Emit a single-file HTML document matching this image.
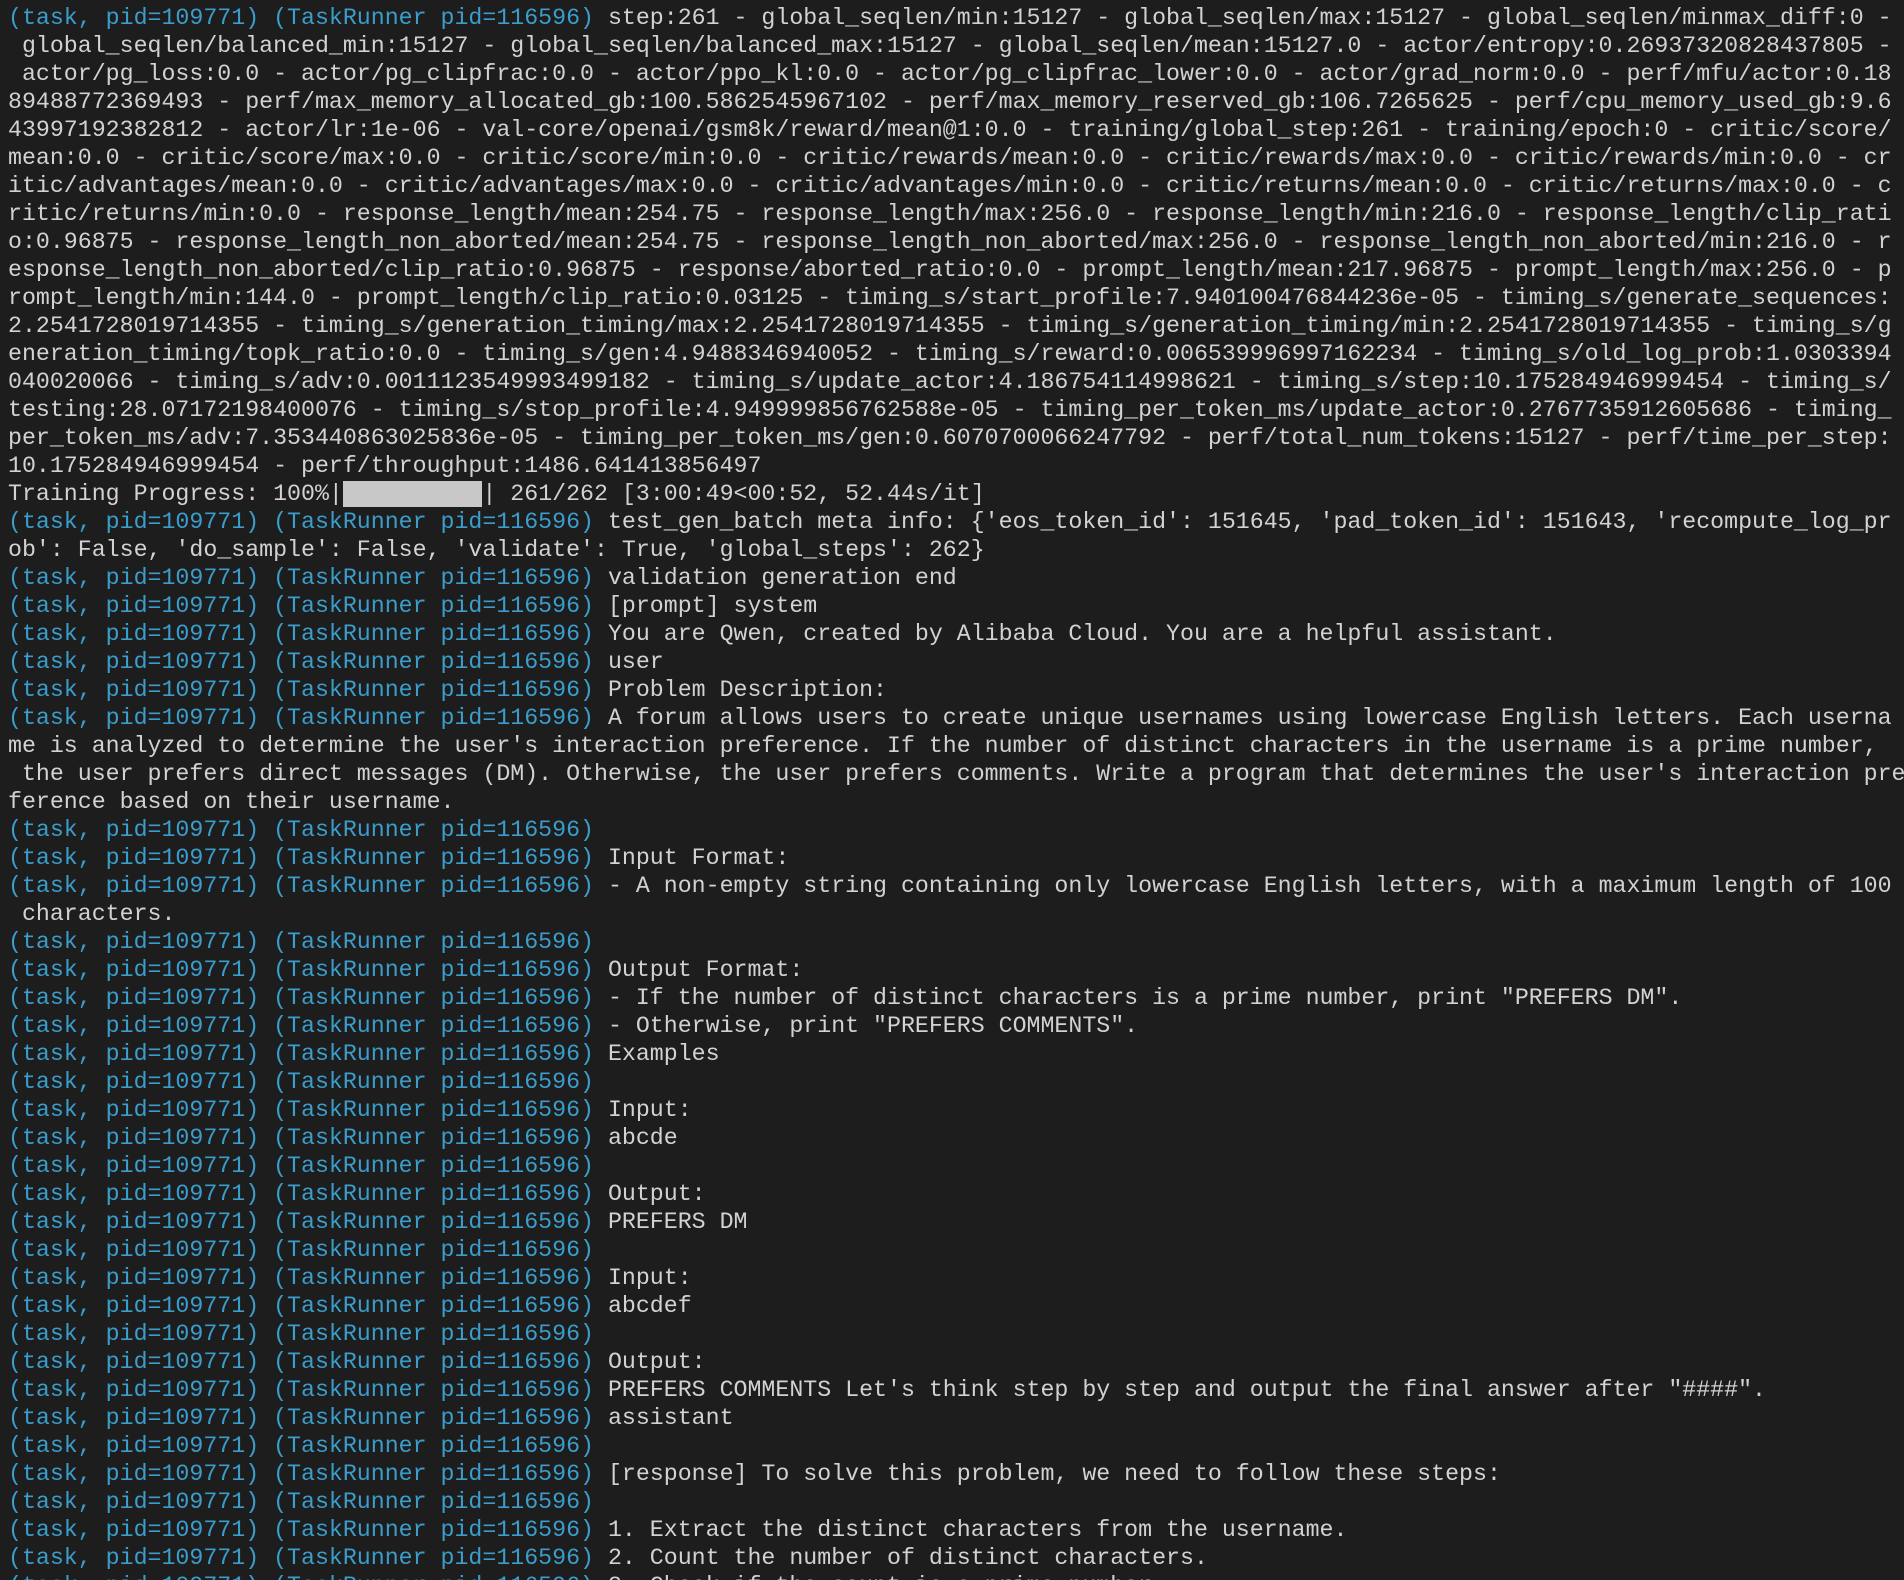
<!DOCTYPE html>
<html><head><meta charset="utf-8"><style>
html,body{margin:0;padding:0;background:#1d1d1d;width:1904px;height:1580px;overflow:hidden}
pre{margin:0;padding:4px 0 0 8px;font-family:"Liberation Mono","DejaVu Sans Mono",monospace;font-size:23.25px;line-height:28px;color:#d2d2d2;white-space:pre}
.b{color:#3a9dcb}
.bar{background:#c8c8c8}
</style></head><body><pre><span class="b">(task, pid=109771) (TaskRunner pid=116596)</span> step:261 - global_seqlen/min:15127 - global_seqlen/max:15127 - global_seqlen/minmax_diff:0 -
 global_seqlen/balanced_min:15127 - global_seqlen/balanced_max:15127 - global_seqlen/mean:15127.0 - actor/entropy:0.26937320828437805 -
 actor/pg_loss:0.0 - actor/pg_clipfrac:0.0 - actor/ppo_kl:0.0 - actor/pg_clipfrac_lower:0.0 - actor/grad_norm:0.0 - perf/mfu/actor:0.18
89488772369493 - perf/max_memory_allocated_gb:100.5862545967102 - perf/max_memory_reserved_gb:106.7265625 - perf/cpu_memory_used_gb:9.6
43997192382812 - actor/lr:1e-06 - val-core/openai/gsm8k/reward/mean@1:0.0 - training/global_step:261 - training/epoch:0 - critic/score/
mean:0.0 - critic/score/max:0.0 - critic/score/min:0.0 - critic/rewards/mean:0.0 - critic/rewards/max:0.0 - critic/rewards/min:0.0 - cr
itic/advantages/mean:0.0 - critic/advantages/max:0.0 - critic/advantages/min:0.0 - critic/returns/mean:0.0 - critic/returns/max:0.0 - c
ritic/returns/min:0.0 - response_length/mean:254.75 - response_length/max:256.0 - response_length/min:216.0 - response_length/clip_rati
o:0.96875 - response_length_non_aborted/mean:254.75 - response_length_non_aborted/max:256.0 - response_length_non_aborted/min:216.0 - r
esponse_length_non_aborted/clip_ratio:0.96875 - response/aborted_ratio:0.0 - prompt_length/mean:217.96875 - prompt_length/max:256.0 - p
rompt_length/min:144.0 - prompt_length/clip_ratio:0.03125 - timing_s/start_profile:7.940100476844236e-05 - timing_s/generate_sequences:
2.2541728019714355 - timing_s/generation_timing/max:2.2541728019714355 - timing_s/generation_timing/min:2.2541728019714355 - timing_s/g
eneration_timing/topk_ratio:0.0 - timing_s/gen:4.9488346940052 - timing_s/reward:0.006539996997162234 - timing_s/old_log_prob:1.0303394
040020066 - timing_s/adv:0.0011123549993499182 - timing_s/update_actor:4.186754114998621 - timing_s/step:10.175284946999454 - timing_s/
testing:28.07172198400076 - timing_s/stop_profile:4.949999856762588e-05 - timing_per_token_ms/update_actor:0.2767735912605686 - timing_
per_token_ms/adv:7.353440863025836e-05 - timing_per_token_ms/gen:0.6070700066247792 - perf/total_num_tokens:15127 - perf/time_per_step:
10.175284946999454 - perf/throughput:1486.641413856497
Training Progress: 100%|<span class="bar">          </span>| 261/262 [3:00:49&lt;00:52, 52.44s/it]
<span class="b">(task, pid=109771) (TaskRunner pid=116596)</span> test_gen_batch meta info: {'eos_token_id': 151645, 'pad_token_id': 151643, 'recompute_log_pr
ob': False, 'do_sample': False, 'validate': True, 'global_steps': 262}
<span class="b">(task, pid=109771) (TaskRunner pid=116596)</span> validation generation end
<span class="b">(task, pid=109771) (TaskRunner pid=116596)</span> [prompt] system
<span class="b">(task, pid=109771) (TaskRunner pid=116596)</span> You are Qwen, created by Alibaba Cloud. You are a helpful assistant.
<span class="b">(task, pid=109771) (TaskRunner pid=116596)</span> user
<span class="b">(task, pid=109771) (TaskRunner pid=116596)</span> Problem Description:
<span class="b">(task, pid=109771) (TaskRunner pid=116596)</span> A forum allows users to create unique usernames using lowercase English letters. Each userna
me is analyzed to determine the user's interaction preference. If the number of distinct characters in the username is a prime number,
 the user prefers direct messages (DM). Otherwise, the user prefers comments. Write a program that determines the user's interaction pre
ference based on their username.
<span class="b">(task, pid=109771) (TaskRunner pid=116596)</span>
<span class="b">(task, pid=109771) (TaskRunner pid=116596)</span> Input Format:
<span class="b">(task, pid=109771) (TaskRunner pid=116596)</span> - A non-empty string containing only lowercase English letters, with a maximum length of 100
 characters.
<span class="b">(task, pid=109771) (TaskRunner pid=116596)</span>
<span class="b">(task, pid=109771) (TaskRunner pid=116596)</span> Output Format:
<span class="b">(task, pid=109771) (TaskRunner pid=116596)</span> - If the number of distinct characters is a prime number, print "PREFERS DM".
<span class="b">(task, pid=109771) (TaskRunner pid=116596)</span> - Otherwise, print "PREFERS COMMENTS".
<span class="b">(task, pid=109771) (TaskRunner pid=116596)</span> Examples
<span class="b">(task, pid=109771) (TaskRunner pid=116596)</span>
<span class="b">(task, pid=109771) (TaskRunner pid=116596)</span> Input:
<span class="b">(task, pid=109771) (TaskRunner pid=116596)</span> abcde
<span class="b">(task, pid=109771) (TaskRunner pid=116596)</span>
<span class="b">(task, pid=109771) (TaskRunner pid=116596)</span> Output:
<span class="b">(task, pid=109771) (TaskRunner pid=116596)</span> PREFERS DM
<span class="b">(task, pid=109771) (TaskRunner pid=116596)</span>
<span class="b">(task, pid=109771) (TaskRunner pid=116596)</span> Input:
<span class="b">(task, pid=109771) (TaskRunner pid=116596)</span> abcdef
<span class="b">(task, pid=109771) (TaskRunner pid=116596)</span>
<span class="b">(task, pid=109771) (TaskRunner pid=116596)</span> Output:
<span class="b">(task, pid=109771) (TaskRunner pid=116596)</span> PREFERS COMMENTS Let's think step by step and output the final answer after "####".
<span class="b">(task, pid=109771) (TaskRunner pid=116596)</span> assistant
<span class="b">(task, pid=109771) (TaskRunner pid=116596)</span>
<span class="b">(task, pid=109771) (TaskRunner pid=116596)</span> [response] To solve this problem, we need to follow these steps:
<span class="b">(task, pid=109771) (TaskRunner pid=116596)</span>
<span class="b">(task, pid=109771) (TaskRunner pid=116596)</span> 1. Extract the distinct characters from the username.
<span class="b">(task, pid=109771) (TaskRunner pid=116596)</span> 2. Count the number of distinct characters.
<span class="b">(task, pid=109771) (TaskRunner pid=116596)</span> 3. Check if the count is a prime number.
</pre></body></html>
